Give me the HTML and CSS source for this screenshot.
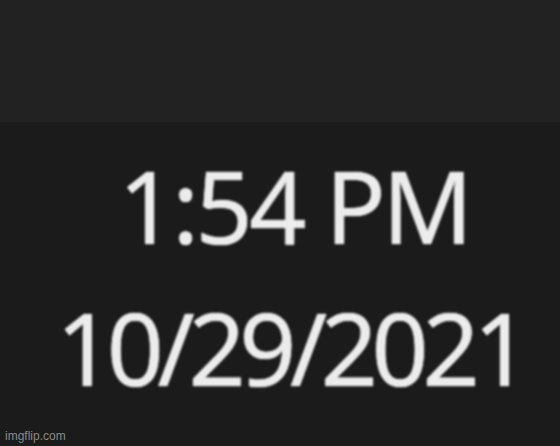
FILE: index.html
```html
<!DOCTYPE html>
<html lang="en">
<head>
  <meta charset="UTF-8">
  <meta name="viewport" content="width=device-width, initial-scale=1.0">
  <title>Clock</title>
  <link rel="stylesheet" href="styles.css">
</head>
<body>
  <div class="taskbar-top"></div>

  <main class="clock">
    <p class="time">1:54 PM</p>
    <p class="date">10/29/2021</p>
  </main>

  <footer class="watermark">imgflip.com</footer>
</body>
</html>
```

FILE: styles.css
```css
body {
  margin: 0;
  padding: 0;
  width: 560px;
  height: 446px;
  overflow: hidden;
  background-color: #1b1b1b;
  font-family: 'Noto Sans', 'Open Sans', sans-serif;
  position: relative;
}

.taskbar-top {
  height: 122px;
  background-color: #222222;
}

.clock {
  display: flex;
  flex-direction: column;
  align-items: center;
  color: #ececec;
  filter: blur(1.1px);
}

.clock p {
  margin: 0;
  font-size: 100px;
  line-height: 142px;
  text-shadow: 0 0 1px #ececec, 0 0 1px #ececec;
}

.time {
  margin-top: 12px !important;
  padding-left: 28px;
  letter-spacing: -3.5px;
}

.date {
  padding-left: 20px;
  letter-spacing: -6.4px;
}

.watermark {
  position: absolute;
  left: 5px;
  bottom: 3px;
  font-family: 'Liberation Sans', Arial, sans-serif;
  font-size: 12px;
  color: #8a8a8a;
}
```
